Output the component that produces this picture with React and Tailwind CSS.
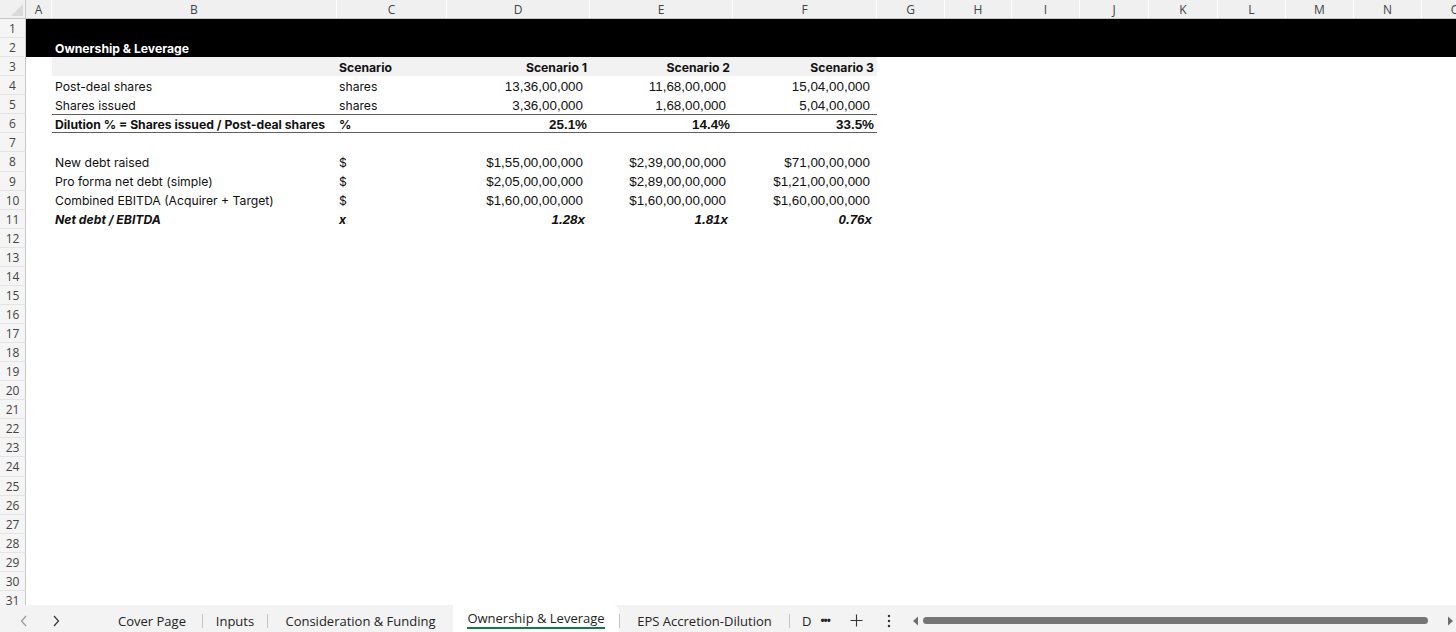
import React from "react";

const colLetters = ["A", "B", "C", "D", "E", "F", "G", "H", "I", "J", "K", "L", "M", "N", "O"];

const gridCols =
  "grid grid-cols-[26px_26px_285px_110px_143px_143px_144px_68px_67px_68px_69px_69px_68px_68px_68px_68px]";

const labelFont = "font-['Inter','Noto_Sans',sans-serif] text-[12.2px] leading-[14px] text-[#111]";
const numFont = "font-['Liberation_Sans',Arial,sans-serif] text-[13.4px] leading-[14px] text-[#111]";

const rows = [
  { n: 1, kind: "black" },
  { n: 2, kind: "black", title: "Ownership & Leverage" },
  { n: 3, kind: "head", c: "Scenario", vals: ["Scenario 1", "Scenario 2", "Scenario 3"] },
  { n: 4, b: "Post-deal shares", c: "shares", vals: ["13,36,00,000", "11,68,00,000", "15,04,00,000"] },
  { n: 5, b: "Shares issued", c: "shares", vals: ["3,36,00,000", "1,68,00,000", "5,04,00,000"] },
  { n: 6, kind: "dilution", b: "Dilution % = Shares issued / Post-deal shares", c: "%", vals: ["25.1%", "14.4%", "33.5%"] },
  { n: 7 },
  { n: 8, b: "New debt raised", c: "$", vals: ["$1,55,00,00,000", "$2,39,00,00,000", "$71,00,00,000"] },
  { n: 9, b: "Pro forma net debt (simple)", c: "$", vals: ["$2,05,00,00,000", "$2,89,00,00,000", "$1,21,00,00,000"] },
  { n: 10, b: "Combined EBITDA (Acquirer + Target)", c: "$", vals: ["$1,60,00,00,000", "$1,60,00,00,000", "$1,60,00,00,000"] },
  { n: 11, kind: "ratio", b: "Net debt / EBITDA", c: "x", vals: ["1.28x", "1.81x", "0.76x"] },
];

for (let i = 12; i <= 31; i++) rows.push({ n: i });

const RowNum = ({ n }) => (
  <div className="h-full flex items-center justify-center pt-[2px] border-r border-b border-r-[#c8c8c8] border-b-[#e4e4e4] bg-[#f5f5f5] text-[12px] leading-[14px] text-[#444] font-['Open_Sans','Noto_Sans',sans-serif]">
    {n}
  </div>
);

const Row = ({ r }) => {
  if (r.kind === "black") {
    return (
      <div className={`${gridCols} h-[19.07px] overflow-hidden`}>
        <RowNum n={r.n} />
        <div className="col-span-15 bg-black flex items-center pt-[3px]">
          <span className="ml-[29px] text-white font-bold text-[12.2px] leading-[14px] font-['Inter','Noto_Sans',sans-serif]">
            {r.title}
          </span>
        </div>
      </div>
    );
  }

  const isHead = r.kind === "head";
  const isDil = r.kind === "dilution";
  const isRatio = r.kind === "ratio";
  const bold = isHead || isDil || isRatio;
  const band = isDil ? "border-t border-b border-[#5f5f5f]" : "";
  const bg = isHead ? "bg-[#f2f2f2]" : "";

  return (
    <div className={`${gridCols} h-[19.07px] overflow-hidden`}>
      <RowNum n={r.n} />
      <div />
      <div className={`flex items-center pt-[2px] pl-[3px] ${band} ${bg} ${labelFont} ${bold ? "font-bold" : ""} ${isRatio ? "italic" : ""}`}>
        {r.b}
      </div>
      <div className={`flex items-center pt-[2px] pl-[2px] ${band} ${bg} ${labelFont} ${bold ? "font-bold" : ""} ${isRatio ? "italic" : ""}`}>
        {r.c}
      </div>
      {[0, 1, 2].map((i) => (
        <div
          key={i}
          className={`flex items-center justify-end pt-[2px] ${band} ${bg} ${
            isHead
              ? `${labelFont} font-bold pr-[3px]`
              : isDil
              ? `${numFont} font-bold pr-[3px]`
              : isRatio
              ? `${numFont} font-bold italic pr-[5px]`
              : `${numFont} pr-[7px]`
          }`}
        >
          {r.vals ? r.vals[i] : ""}
        </div>
      ))}
      <div className="col-span-9" />
    </div>
  );
};

const Sep = () => (
  <div className="flex items-center pt-[4px]">
    <div className="w-px h-[14px] bg-[#c4c4c4]" />
  </div>
);

const Tab = ({ w, children }) => (
  <div className={`${w} flex items-center justify-center pt-[4px]`}>{children}</div>
);

const TabBar = () => (
  <div className="h-[27px] bg-[#f3f3f3] flex items-stretch text-[13px] leading-[16px] text-[#242424] font-['Open_Sans','Noto_Sans',sans-serif]">
    <div className="w-[102px] flex items-center pt-[4px]">
      <svg className="ml-[20px]" width="8" height="12" viewBox="0 0 8 12">
        <path d="M6 1 L1.5 6 L6 11" fill="none" stroke="#9a9a9a" strokeWidth="1.2" />
      </svg>
      <svg className="ml-[24px]" width="8" height="12" viewBox="0 0 8 12">
        <path d="M2 1 L6.5 6 L2 11" fill="none" stroke="#333" strokeWidth="1.2" />
      </svg>
    </div>
    <Tab w="w-[100px]">Cover Page</Tab>
    <Sep />
    <Tab w="w-[64px]">Inputs</Tab>
    <Sep />
    <Tab w="w-[185px]">Consideration &amp; Funding</Tab>
    <div className="w-[166px] bg-white rounded-tr-[6px] flex items-center justify-center">
      <span className="mt-[1px] border-b-2 border-[#107c41] pb-[1px]">Ownership &amp; Leverage</span>
    </div>
    <Sep />
    <Tab w="w-[169px]">EPS Accretion-Dilution</Tab>
    <Sep />
    <div className="flex items-center pt-[4px]">
      <span className="ml-[12px]">D</span>
      <span className="ml-[9px] text-[11px] tracking-[-1px] font-bold leading-none mt-[-3px]">•••</span>
      <svg className="ml-[20px]" width="13" height="13" viewBox="0 0 13 13">
        <path d="M6.5 0.5 V12.5 M0.5 6.5 H12.5" stroke="#333" strokeWidth="1.1" />
      </svg>
      <svg className="ml-[24px]" width="4" height="14" viewBox="0 0 4 14">
        <circle cx="2" cy="2" r="1.2" fill="#333" />
        <circle cx="2" cy="7" r="1.2" fill="#333" />
        <circle cx="2" cy="12" r="1.2" fill="#333" />
      </svg>
    </div>
    <div className="ml-[21px] flex-1 flex items-center pt-[4px]">
      <svg width="8" height="10" viewBox="0 0 8 10">
        <path d="M6 0.5 L1 5 L6 9.5 Z" fill="#6f6f6f" />
      </svg>
      <div className="ml-[3px] w-[505px] h-[7px] rounded-full bg-[#757575]" />
      <div className="flex-1" />
      <svg className="mr-[2px]" width="8" height="10" viewBox="0 0 8 10">
        <path d="M2 0.5 L7 5 L2 9.5 Z" fill="#6f6f6f" />
      </svg>
    </div>
  </div>
);

export default function App() {
  return (
    <div className="w-[1456px] h-[632px] bg-white overflow-hidden flex flex-col">
      <div className="h-[605px] overflow-hidden">
        <div className={`${gridCols} h-[19px] bg-[#f0f0f0] border-b border-[#c6c6c6]`}>
          <div className="border-r border-[#c8c8c8] relative overflow-hidden">
            <svg className="absolute right-[2px] bottom-[2px]" width="12" height="12" viewBox="0 0 12 12">
              <path d="M12 0 L12 12 L0 12 Z" fill="#d9d9d9" />
            </svg>
          </div>
          {colLetters.map((l) => (
            <div
              key={l}
              className="flex items-center justify-center pt-[1px] border-r border-white text-[12px] leading-[14px] text-[#444] font-['Open_Sans','Noto_Sans',sans-serif]"
            >
              {l}
            </div>
          ))}
        </div>
        {rows.map((r) => (
          <Row key={r.n} r={r} />
        ))}
      </div>
      <TabBar />
    </div>
  );
}
